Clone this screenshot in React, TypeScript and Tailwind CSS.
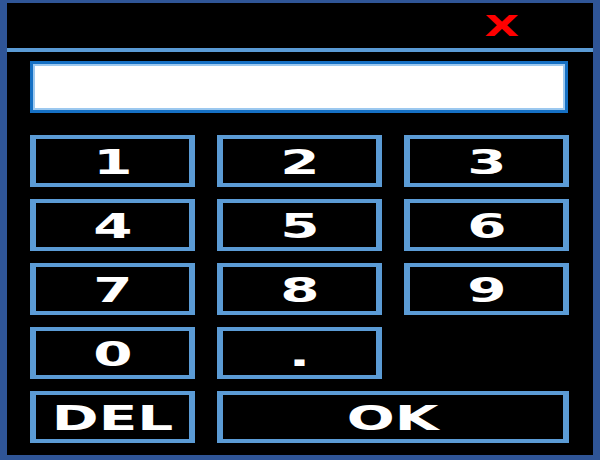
import React from "react";

const font = { fontFamily: '"DejaVu Sans", Verdana, sans-serif' };

function Key({ label, wide }: { label: string; wide?: boolean }) {
  return (
    <div
      className={`${wide ? "col-span-2" : ""} h-[52px] border-x-[6px] border-y-[4px] border-[#5b9bd5] bg-black flex items-center justify-center`}
    >
      <span className="text-white font-bold text-[34px] leading-none inline-block scale-x-[1.66] translate-y-[1px]" style={font}>
        {label}
      </span>
    </div>
  );
}

export default function App() {
  return (
    <div className="w-[600px] h-[460px] bg-black border-l-[7px] border-r-[7px] border-t-[3px] border-b-[5px] border-[#2f5597] flex flex-col" style={font}>
      <div className="h-[45px] flex items-center justify-end pr-[73px]">
        <div className="w-[36px] flex justify-center">
          <span className="text-[#ff0000] font-bold text-[28px] leading-none inline-block scale-x-[1.6] translate-y-[1px]" style={font}>
            X
          </span>
        </div>
      </div>
      <div className="h-[4px] bg-[#5b9bd5]" />
      <div className="flex-1 pt-[9px] pl-[23px] pr-[23px] flex flex-col">
        <div className="h-[52px] mr-[2px] bg-white border-[3px] border-[#1570c4] shadow-[inset_0_0_0_2px_#9cc8ef]" />
        <div className="mt-[22px] grid grid-cols-[165px_165px_165px] gap-x-[22px] gap-y-[12px]">
          <Key label="1" />
          <Key label="2" />
          <Key label="3" />
          <Key label="4" />
          <Key label="5" />
          <Key label="6" />
          <Key label="7" />
          <Key label="8" />
          <Key label="9" />
          <Key label="0" />
          <Key label="." />
          <div />
          <Key label="DEL" />
          <Key label="OK" wide />
        </div>
      </div>
    </div>
  );
}
